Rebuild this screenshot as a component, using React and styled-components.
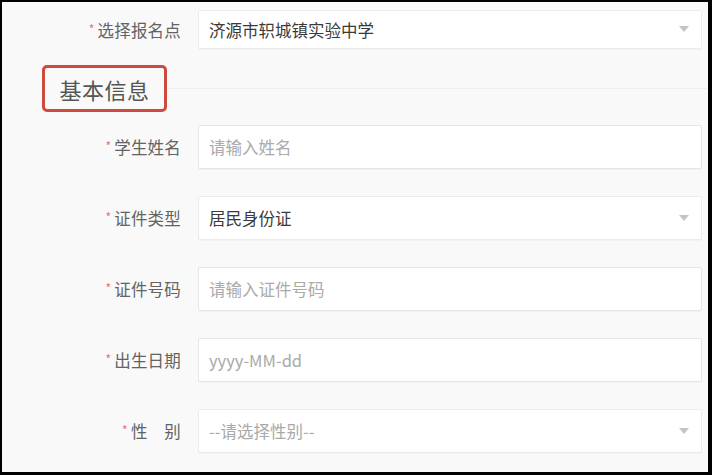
import React from 'react';
import styled, {createGlobalStyle} from 'styled-components';

const Global = createGlobalStyle`
  html, body {
    margin: 0;
    padding: 0;
    background: #000;
  }
  body {
    font-family: "Noto Sans CJK SC", "Noto Sans", sans-serif;
  }
`;

const Frame = styled.div`
  box-sizing: border-box;
  width: 712px;
  height: 475px;
  border-style: solid;
  border-color: #000;
  border-width: 2px 4px 3px 2px;
  background: #f9f9f9;
  padding-top: 8px;
  overflow: hidden;
`;

const Row = styled.div`
  display: grid;
  grid-template-columns: 179px 504px;
  column-gap: 17px;
  align-items: center;
  height: ${p => p.$h || 44}px;
  margin-top: ${p => p.$mt || 0}px;
`;

const Label = styled.label`
  justify-self: end;
  font-size: 16.5px;
  color: #636363;
  white-space: pre;
  letter-spacing: 0.2px;
`;

const Star = styled.span`
  color: #ee6d7a;
  font-size: 12px;
  margin-right: 3px;
  position: relative;
  top: -3px;
`;

const Box = styled.div`
  box-sizing: border-box;
  height: 100%;
  display: flex;
  align-items: center;
  justify-content: space-between;
  padding: 0 12px 0 10px;
  background: #fff;
  border: 1px solid #ececec;
  border-radius: 2px;
  box-shadow: 0 1px 1px rgba(0, 0, 0, 0.03);
  font-size: 16.5px;
  color: ${p => (p.$placeholder ? '#a9a9a9' : '#3a3a3a')};
`;

const TextInput = styled.input`
  box-sizing: border-box;
  width: 100%;
  height: 100%;
  padding: 0 10px;
  background: #fff;
  border: 1px solid #e6e6e6;
  border-radius: 2px;
  box-shadow: 0 1px 1px rgba(0, 0, 0, 0.03);
  font-family: inherit;
  font-size: 16.5px;
  color: #333;
  outline: none;
  &::placeholder {
    color: #aaa;
  }
`;

const Section = styled.div`
  display: flex;
  align-items: center;
  margin: 16px 0 13px 40px;
`;

const Title = styled.h3`
  box-sizing: border-box;
  margin: 0;
  width: 125px;
  height: 47px;
  display: flex;
  align-items: center;
  justify-content: center;
  border: 3px solid #cf4a3e;
  border-radius: 5px;
  font-size: 22px;
  font-weight: 400;
  color: #555;
  letter-spacing: 0.5px;
`;

const Divider = styled.div`
  flex: 1;
  height: 1px;
  background: #efefef;
`;

const Arrow = () => (
  <svg width="10" height="7" viewBox="0 0 10 7">
    <polygon points="0,0 10,0 5,6" fill="#c4c4c4" />
  </svg>
);

function Select({value, placeholder}) {
  return (
    <Box $placeholder={!value}>
      <span>{value || placeholder}</span>
      <Arrow />
    </Box>
  );
}

function Field({label, children, ...rest}) {
  return (
    <Row {...rest}>
      <Label>
        <Star>*</Star>
        {label}
      </Label>
      {children}
    </Row>
  );
}

export default function App() {
  return (
    <>
      <Global />
      <Frame>
        <Field label="选择报名点" $h={39}>
          <Select value="济源市轵城镇实验中学" />
        </Field>

        <Section>
          <Title>基本信息</Title>
          <Divider />
        </Section>

        <Field label="学生姓名">
          <TextInput placeholder="请输入姓名" readOnly />
        </Field>
        <Field label="证件类型" $mt={27}>
          <Select value="居民身份证" />
        </Field>
        <Field label="证件号码" $mt={27}>
          <TextInput placeholder="请输入证件号码" readOnly />
        </Field>
        <Field label="出生日期" $mt={27}>
          <TextInput placeholder="yyyy-MM-dd" readOnly />
        </Field>
        <Field label={'性\u3000别'} $mt={27}>
          <Select placeholder="--请选择性别--" />
        </Field>
      </Frame>
    </>
  );
}
